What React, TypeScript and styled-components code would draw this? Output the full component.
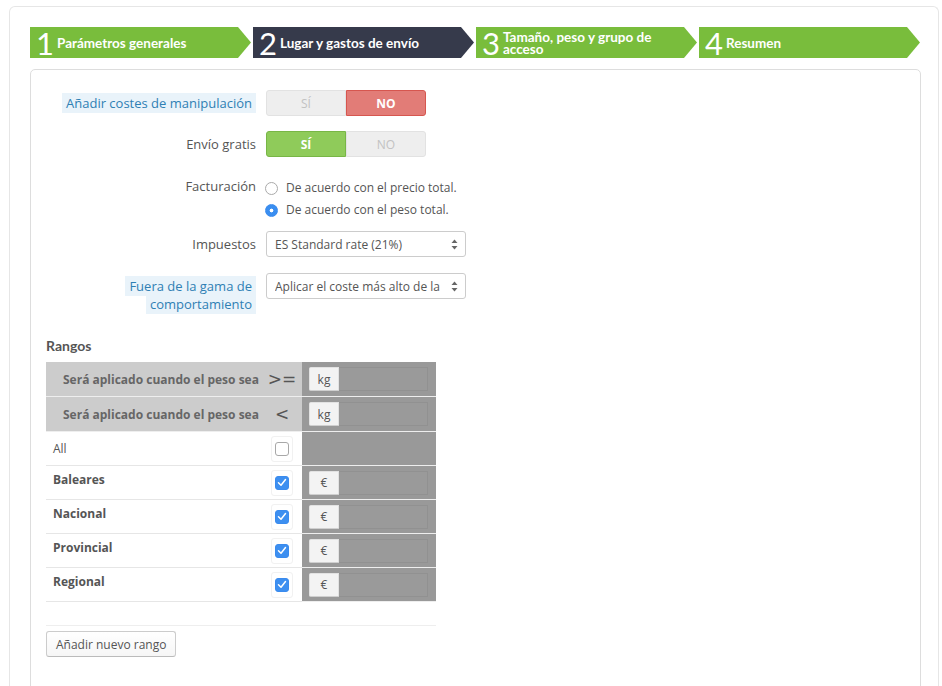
import React from "react";
import styled, { createGlobalStyle } from "styled-components";

const Global = createGlobalStyle`
  html, body { margin: 0; padding: 0; background: #fff; overflow: hidden; }
  body { font-family: "Open Sans", "Liberation Sans", sans-serif; font-size: 13px; color: #555; }
  * { box-sizing: border-box; }
`;

const Page = styled.div`
  padding: 6px 3px 0 9px;
  height: 686px;
`;

const Outer = styled.div`
  border: 1px solid #e6e6e6;
  border-bottom: none;
  border-radius: 6px 6px 0 0;
  padding: 20px 17px 0 20px;
  height: 740px;
`;

const Steps = styled.div`
  display: grid;
  grid-template-columns: repeat(4, 1fr);
  gap: 2px;
  height: 31px;
  margin-right: 1px;
`;

const Step = styled.div<{ $active?: boolean }>`
  background: ${(p) => (p.$active ? "#363a4b" : "#79bd3c")};
  clip-path: polygon(0 0, calc(100% - 13px) 0, 100% 50%, calc(100% - 13px) 100%, 0 100%);
  display: flex;
  align-items: center;
  gap: 6px;
  padding-left: 6px;
  color: #fff;
`;

const StepNum = styled.span`
  font-family: Lato, "Open Sans", sans-serif;
  font-weight: 400;
  font-size: 31px;
  line-height: 28px;
  width: 15px;
  text-align: center;
`;

const StepLabel = styled.span`
  font-family: Lato, "Open Sans", sans-serif;
  font-weight: 700;
  font-size: 13.5px;
  line-height: 12px;
  max-width: 162px;
`;

const Panel = styled.div`
  margin-top: 11px;
  border: 1px solid #ddd;
  border-radius: 5px;
  padding: 20px 15px 40px;
  min-height: 700px;
`;

const FormRow = styled.div<{ $mt?: number; $align?: string }>`
  display: grid;
  grid-template-columns: 210px 200px;
  column-gap: 10px;
  align-items: ${(p) => p.$align ?? "center"};
  margin-top: ${(p) => p.$mt ?? 0}px;
`;

const Label = styled.div<{ $pt?: number; $lh?: number }>`
  text-align: right;
  font-size: 13px;
  line-height: ${(p) => p.$lh ?? 20}px;
  color: #555;
  padding-top: ${(p) => p.$pt ?? 0}px;
`;

const Hint = styled.span`
  background: #e9f3fa;
  color: #2f80b4;
  padding: 1px 4px;
  line-height: 18px;
  box-decoration-break: clone;
  -webkit-box-decoration-break: clone;
`;

const Toggle = styled.div`
  display: flex;
  width: 160px;
  height: 26px;
`;

type Tone = "red" | "green" | "off";

const ToggleOpt = styled.div<{ $tone: Tone; $side: "l" | "r" }>`
  flex: 1;
  display: flex;
  align-items: center;
  justify-content: center;
  font-size: 12px;
  font-weight: ${(p) => (p.$tone === "off" ? 400 : 700)};
  color: ${(p) => (p.$tone === "off" ? "#c2c2c2" : "#fff")};
  background: ${(p) => (p.$tone === "red" ? "#e27c77" : p.$tone === "green" ? "#8fcb5a" : "#eeeeee")};
  border: 1px solid ${(p) => (p.$tone === "red" ? "#d6564f" : p.$tone === "green" ? "#78b646" : "#e2e2e2")};
  border-radius: ${(p) => (p.$side === "l" ? "3px 0 0 3px" : "0 3px 3px 0")};
`;

const RadioGroup = styled.div`
  padding-top: 4px;
`;

const RadioItem = styled.div`
  display: flex;
  align-items: center;
  gap: 8px;
  height: 22px;
  font-size: 12px;
  color: #555;
  margin-left: -1px;
`;

const RadioDot = styled.span<{ $checked?: boolean }>`
  width: 13px;
  height: 13px;
  border-radius: 50%;
  flex: none;
  margin-top: 2px;
  border: 1px solid ${(p) => (p.$checked ? "#3a8bee" : "#aaa")};
  background: ${(p) =>
    p.$checked ? "radial-gradient(circle, #fff 0 1.6px, #3a8ef0 2.2px)" : "#fff"};
`;

const Select = styled.div`
  width: 200px;
  height: 26px;
  border: 1px solid #ccc;
  border-radius: 3px;
  background: #fff;
  display: flex;
  align-items: center;
  justify-content: space-between;
  gap: 8px;
  padding: 0 7px 0 8px;
  font-size: 12px;
  color: #555;
  white-space: nowrap;
  overflow: hidden;
`;

const SelectText = styled.span`
  overflow: hidden;
  flex: 1;
`;

const Section = styled.div`
  margin-top: 25px;
  width: 390px;
`;

const SectionTitle = styled.div`
  font-family: Lato, "Open Sans", sans-serif;
  font-size: 14px;
  font-weight: 700;
  line-height: 16px;
  color: #555;
  margin-bottom: 8px;
`;

const RangeRow = styled.div<{ $h: number }>`
  display: grid;
  grid-template-columns: 216px 40px 134px;
  height: ${(p) => p.$h}px;
`;

type CellTone = "light" | "dark" | "white";

const Cell = styled.div<{ $tone: CellTone; $align?: string; $pad?: string; $bold?: boolean }>`
  display: flex;
  align-items: ${(p) => p.$align ?? "center"};
  justify-content: flex-start;
  padding: ${(p) => p.$pad ?? "0"};
  background: ${(p) => (p.$tone === "light" ? "#cccccc" : p.$tone === "dark" ? "#999999" : "#fff")};
  border-bottom: 1px solid ${(p) => (p.$tone === "white" ? "#e6e6e6" : "#eeeeee")};
  font-size: 12px;
  font-weight: ${(p) => (p.$bold ? 700 : 400)};
  color: ${(p) => (p.$tone === "light" ? "#666" : "#555")};
`;

const OpCell = styled(Cell)`
  justify-content: center;
  font-size: 17px;
  font-weight: 400;
  color: #555;
  font-family: "DejaVu Sans", sans-serif;
`;

const CenterCell = styled(Cell)`
  justify-content: center;
`;

const InputGroup = styled.div`
  display: flex;
  height: 24px;
  width: 119px;
  margin-left: 7px;
`;

const Addon = styled.span`
  width: 30px;
  background: #f3f3f3;
  border: 1px solid #e2e2e2;
  border-bottom-color: #cfcfcf;
  border-radius: 2px 0 0 2px;
  display: flex;
  align-items: center;
  justify-content: center;
  font-size: 12px;
  color: #555;
`;

const InputBox = styled.span`
  flex: 1;
  border: 1px solid #919191;
  border-left: none;
  background: #9a9a9a;
`;

const CheckWrap = styled.div`
  width: 22px;
  height: 26px;
  border: 1px solid #f1f1f1;
  border-radius: 3px;
  display: flex;
  align-items: center;
  justify-content: center;
  background: #fff;
`;

const Checkbox = styled.span<{ $checked?: boolean }>`
  width: 14px;
  height: 14px;
  border-radius: 3px;
  border: 1px solid ${(p) => (p.$checked ? "#3a8bee" : "#a8a8a8")};
  background: ${(p) => (p.$checked ? "#3d8ff0" : "#fff")};
  display: flex;
  align-items: center;
  justify-content: center;
`;

const Divider = styled.div`
  margin-top: 23px;
  border-top: 1px solid #eee;
  width: 390px;
`;

const Button = styled.button`
  margin-top: 5px;
  height: 26px;
  padding: 0 9px;
  border: 1px solid #ccc;
  border-bottom-color: #bbb;
  border-radius: 3px;
  background: linear-gradient(#ffffff, #f6f6f6);
  font-family: "Open Sans", "Liberation Sans", sans-serif;
  font-size: 12px;
  color: #555;
`;

const SelectArrows = () => (
  <svg width="7" height="11" viewBox="0 0 7 11">
    <path d="M3.5 0.5 L6.5 4 H0.5 Z" fill="#666" />
    <path d="M3.5 10.5 L6.5 7 H0.5 Z" fill="#666" />
  </svg>
);

const CheckMark = () => (
  <svg width="10" height="9" viewBox="0 0 10 9">
    <path d="M1.5 4.8 L4 7.2 L8.5 1.5" stroke="#fff" strokeWidth="1.5" fill="none" strokeLinecap="round" strokeLinejoin="round" />
  </svg>
);

const zones = ["Baleares", "Nacional", "Provincial", "Regional"];

export default function App() {
  return (
    <>
      <Global />
      <Page>
        <Outer>
          <Steps>
            <Step>
              <StepNum>1</StepNum>
              <StepLabel>Parámetros generales</StepLabel>
            </Step>
            <Step $active>
              <StepNum>2</StepNum>
              <StepLabel>Lugar y gastos de envío</StepLabel>
            </Step>
            <Step>
              <StepNum>3</StepNum>
              <StepLabel>Tamaño, peso y grupo de acceso</StepLabel>
            </Step>
            <Step>
              <StepNum>4</StepNum>
              <StepLabel>Resumen</StepLabel>
            </Step>
          </Steps>

          <Panel>
            <FormRow>
              <Label>
                <Hint>Añadir costes de manipulación</Hint>
              </Label>
              <Toggle>
                <ToggleOpt $tone="off" $side="l">SÍ</ToggleOpt>
                <ToggleOpt $tone="red" $side="r">NO</ToggleOpt>
              </Toggle>
            </FormRow>

            <FormRow $mt={15}>
              <Label>Envío gratis</Label>
              <Toggle>
                <ToggleOpt $tone="green" $side="l">SÍ</ToggleOpt>
                <ToggleOpt $tone="off" $side="r">NO</ToggleOpt>
              </Toggle>
            </FormRow>

            <FormRow $mt={15} $align="start">
              <Label $pt={4}>Facturación</Label>
              <RadioGroup>
                <RadioItem>
                  <RadioDot />
                  De acuerdo con el precio total.
                </RadioItem>
                <RadioItem>
                  <RadioDot $checked />
                  De acuerdo con el peso total.
                </RadioItem>
              </RadioGroup>
            </FormRow>

            <FormRow $mt={11}>
              <Label>Impuestos</Label>
              <Select>
                <SelectText>ES Standard rate (21%)</SelectText>
                <SelectArrows />
              </Select>
            </FormRow>

            <FormRow $mt={16} $align="start">
              <Label $pt={4} $lh={18}>
                <Hint>Fuera de la gama de comportamiento</Hint>
              </Label>
              <Select>
                <SelectText>Aplicar el coste más alto de la</SelectText>
                <SelectArrows />
              </Select>
            </FormRow>

            <Section>
              <SectionTitle>Rangos</SectionTitle>
              <RangeRow $h={35}>
                <Cell $tone="light" $bold $pad="0 0 0 17px">Será aplicado cuando el peso sea</Cell>
                <OpCell $tone="light">&gt;=</OpCell>
                <Cell $tone="dark">
                  <InputGroup>
                    <Addon>kg</Addon>
                    <InputBox />
                  </InputGroup>
                </Cell>
              </RangeRow>
              <RangeRow $h={35}>
                <Cell $tone="light" $bold $pad="0 0 0 17px">Será aplicado cuando el peso sea</Cell>
                <OpCell $tone="light">&lt;</OpCell>
                <Cell $tone="dark">
                  <InputGroup>
                    <Addon>kg</Addon>
                    <InputBox />
                  </InputGroup>
                </Cell>
              </RangeRow>
              <RangeRow $h={34}>
                <Cell $tone="white" $pad="0 0 0 7px">All</Cell>
                <CenterCell $tone="white">
                  <CheckWrap>
                    <Checkbox />
                  </CheckWrap>
                </CenterCell>
                <Cell $tone="dark" />
              </RangeRow>
              {zones.map((z) => (
                <RangeRow $h={34} key={z}>
                  <Cell $tone="white" $bold $align="flex-start" $pad="5px 0 0 7px">{z}</Cell>
                  <CenterCell $tone="white">
                    <CheckWrap>
                      <Checkbox $checked>
                        <CheckMark />
                      </Checkbox>
                    </CheckWrap>
                  </CenterCell>
                  <Cell $tone="dark">
                    <InputGroup>
                      <Addon>€</Addon>
                      <InputBox />
                    </InputGroup>
                  </Cell>
                </RangeRow>
              ))}
              <Divider />
              <Button>Añadir nuevo rango</Button>
            </Section>
          </Panel>
        </Outer>
      </Page>
    </>
  );
}
